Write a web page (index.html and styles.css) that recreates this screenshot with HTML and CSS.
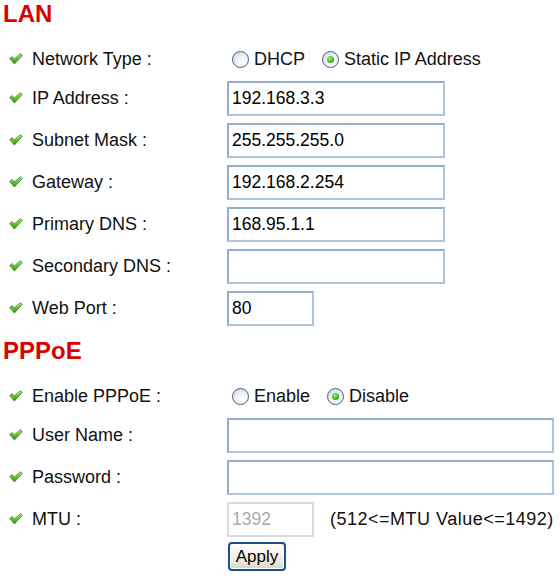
FILE: index.html
```html
<!DOCTYPE html>
<html>
<head>
<meta charset="utf-8">
<link rel="stylesheet" href="styles.css">
</head>
<body>
<svg width="0" height="0" class="defs">
  <defs>
    <linearGradient id="g" x1="0" y1="0" x2="0" y2="1">
      <stop offset="0" stop-color="#a6ec6e"/>
      <stop offset="0.5" stop-color="#62c72f"/>
      <stop offset="1" stop-color="#2f8a16"/>
    </linearGradient>
    <symbol id="chk" viewBox="0 0 13 11">
      <path d="M0.6 5 L3 3.2 L5 5.4 L10.6 0.6 L12.4 2.2 L5 10.2 Z" fill="url(#g)" stroke="#3b7d22" stroke-width="0.7" stroke-linejoin="round"/>
    </symbol>
  </defs>
</svg>
<div class="page">
  <h2 class="title">LAN</h2>
  <div class="row row-short">
    <div class="label"><svg class="chk"><use href="#chk"/></svg><span>Network Type :</span></div>
    <div class="field">
      <label class="opt"><input type="radio" name="nt" class="radio"><span>DHCP</span></label>
      <label class="opt"><input type="radio" name="nt" class="radio" checked><span>Static IP Address</span></label>
    </div>
  </div>
  <div class="row">
    <div class="label"><svg class="chk"><use href="#chk"/></svg><span>IP Address :</span></div>
    <div class="field"><input type="text" class="box box-md" value="192.168.3.3"></div>
  </div>
  <div class="row">
    <div class="label"><svg class="chk"><use href="#chk"/></svg><span>Subnet Mask :</span></div>
    <div class="field"><input type="text" class="box box-md" value="255.255.255.0"></div>
  </div>
  <div class="row">
    <div class="label"><svg class="chk"><use href="#chk"/></svg><span>Gateway :</span></div>
    <div class="field"><input type="text" class="box box-md" value="192.168.2.254"></div>
  </div>
  <div class="row">
    <div class="label"><svg class="chk"><use href="#chk"/></svg><span>Primary DNS :</span></div>
    <div class="field"><input type="text" class="box box-md" value="168.95.1.1"></div>
  </div>
  <div class="row">
    <div class="label"><svg class="chk"><use href="#chk"/></svg><span>Secondary DNS :</span></div>
    <div class="field"><input type="text" class="box box-md" value=""></div>
  </div>
  <div class="row">
    <div class="label"><svg class="chk"><use href="#chk"/></svg><span>Web Port :</span></div>
    <div class="field"><input type="text" class="box box-sm" value="80"></div>
  </div>

  <h2 class="title title-2">PPPoE</h2>
  <div class="row row-short">
    <div class="label"><svg class="chk"><use href="#chk"/></svg><span>Enable PPPoE :</span></div>
    <div class="field">
      <label class="opt"><input type="radio" name="pp" class="radio"><span>Enable</span></label>
      <label class="opt"><input type="radio" name="pp" class="radio" checked><span>Disable</span></label>
    </div>
  </div>
  <div class="row">
    <div class="label"><svg class="chk"><use href="#chk"/></svg><span>User Name :</span></div>
    <div class="field"><input type="text" class="box box-lg" value=""></div>
  </div>
  <div class="row">
    <div class="label"><svg class="chk"><use href="#chk"/></svg><span>Password :</span></div>
    <div class="field"><input type="password" class="box box-lg" value=""></div>
  </div>
  <div class="row">
    <div class="label"><svg class="chk"><use href="#chk"/></svg><span>MTU :</span></div>
    <div class="field"><input type="text" class="box box-sm" value="1392" disabled><span class="hint">(512&lt;=MTU Value&lt;=1492)</span></div>
  </div>
  <div class="actions"><button class="btn">Apply</button></div>
</div>
</body>
</html>
```

FILE: styles.css
```css
html, body {
  margin: 0;
  padding: 0;
  background: #fff;
}
.defs {
  position: absolute;
  width: 0;
  height: 0;
}
.page {
  font-family: "Liberation Sans", Arial, sans-serif;
  font-size: 18px;
  color: #111;
  width: 560px;
}
.title {
  margin: 0;
  padding: 0 0 13px 3px;
  font-size: 24px;
  line-height: 28px;
  font-weight: bold;
  color: #dd0000;
}
.title-2 {
  margin-top: 8px;
}
.row {
  display: flex;
  align-items: center;
  height: 42px;
}
.row-short {
  height: 36px;
}
.label {
  width: 227px;
  flex: none;
  display: flex;
  align-items: center;
}
.chk {
  width: 14px;
  height: 12px;
  margin: 0 9px 0 9px;
  flex: none;
}
.field {
  display: flex;
  align-items: center;
}
.opt {
  display: flex;
  align-items: center;
  margin-right: 12px;
}
.radio {
  appearance: none;
  -webkit-appearance: none;
  width: 17px;
  height: 17px;
  margin: 0 5px 0 5px;
  border: 1px solid #3f5f86;
  border-radius: 50%;
  background: radial-gradient(circle at 62% 68%, #ffffff 0, #eef0f3 45%, #c4cbd4 100%);
  box-sizing: border-box;
  position: relative;
}
.radio:checked::after {
  content: "";
  position: absolute;
  left: 4px;
  top: 4px;
  width: 7px;
  height: 7px;
  border-radius: 50%;
  background: radial-gradient(circle at 40% 35%, #a4f282 0, #3fb81e 55%, #1f7d16 100%);
}
.box {
  box-sizing: border-box;
  height: 35px;
  border: 2px solid #a6bdd8;
  border-color: #95aed0 #adc3de #adc3de #95aed0;
  padding: 0 3px;
  font-family: "Liberation Sans", Arial, sans-serif;
  font-size: 17.5px;
  color: #000;
  background: #fff;
  outline: none;
}
.box-md { width: 218px; }
.box-lg { width: 327px; }
.box-sm { width: 87px; }
.box:disabled {
  color: #aaaaaa;
  border-color: #d2dde9;
  background: #fff;
}
.hint {
  margin-left: 16px;
  letter-spacing: 0.5px;
}
.actions {
  padding: 2px 0 0 228px;
}
.btn {
  box-sizing: border-box;
  width: 58px;
  height: 29px;
  padding: 0;
  font-family: "Liberation Sans", Arial, sans-serif;
  font-size: 17px;
  color: #000;
  border: 2px solid #1d4f8e;
  border-radius: 4px;
  background: linear-gradient(#ffffff, #ece9e0 70%, #d8d4c8);
  box-shadow: inset 0 0 0 1px #fefefe;
}
```
